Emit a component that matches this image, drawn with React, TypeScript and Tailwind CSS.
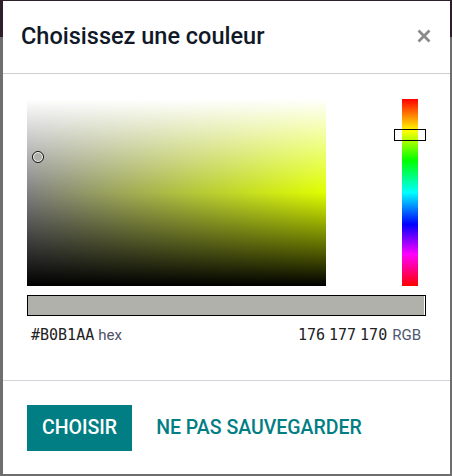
import React from 'react';

const sans = "font-['Roboto','Liberation_Sans',sans-serif]";
const mono = "font-['DejaVu_Sans_Mono','Liberation_Mono',monospace]";

export default function App() {
  return (
    <div className="w-[452px] h-[476px] overflow-hidden bg-[linear-gradient(to_bottom,#2e1f2b_37px,#6e6e6e_37px)] pt-[1px] pl-[3px]">
      <div className={`w-[447px] h-[473px] bg-white flex flex-col ${sans}`}>
        {/* header */}
        <div className="h-[73px] shrink-0 border-b border-[#cfcfcf] flex items-center justify-between pl-[18px] pr-[19px]">
          <h1 className="text-[23.5px] font-medium text-[#111827] -mt-[1px]">Choisissez une couleur</h1>
          <button className="text-[#8a8a8a] -mt-[2px]">
            <svg width="14" height="14" viewBox="0 0 14 14">
              <path d="M1.5 1.5 L12.5 12.5 M12.5 1.5 L1.5 12.5" stroke="currentColor" strokeWidth="2.8" />
            </svg>
          </button>
        </div>

        {/* body */}
        <div className="flex-1 px-[24px] pt-[25px] flex flex-col">
          <div className="flex justify-between">
            <div className="relative w-[299px] h-[187px] bg-[linear-gradient(to_bottom,#fff,rgba(255,255,255,0)_50%,rgba(0,0,0,0)_50%,#000),linear-gradient(to_right,#808080,#dfff00)]">
              <div className="absolute left-[5px] top-[52px] w-[12px] h-[12px] rounded-full border border-[#111] bg-[#b0b1aa] shadow-[inset_0_0_0_1px_#fff]" />
            </div>
            <div className="relative w-[32px] flex justify-center">
              <div className="w-[16px] h-[187px] bg-[linear-gradient(to_bottom,#f00,#ff0_17%,#0f0_33%,#0ff_50%,#00f_67%,#f0f_83%,#f00)]" />
              <div className="absolute left-0 top-[30px] w-[32px] h-[12px] border border-black" />
            </div>
          </div>

          <div className="mt-[9px] h-[21px] border border-black bg-[#b0b1aa] shadow-[inset_-1px_0_0_#fff]" />

          <div className="mt-[8px] flex justify-between items-baseline pl-[4px] pr-[5px] text-[15px]">
            <div className="flex items-baseline gap-[4px]">
              <span className={`${mono} text-[#222]`}>#B0B1AA</span>
              <span className="text-[#4f4f66]">hex</span>
            </div>
            <div className="flex items-baseline gap-[4px]">
              <span className={`${mono} text-[#222]`}>176</span>
              <span className={`${mono} text-[#222]`}>177</span>
              <span className={`${mono} text-[#222]`}>170</span>
              <span className="text-[#4f5670] ml-[1px]">RGB</span>
            </div>
          </div>
        </div>

        {/* footer */}
        <div className="h-[94px] shrink-0 border-t border-[#d3d5db] px-[24px] pt-[24px] flex items-start">
          <button className="h-[46px] px-[15px] bg-[#017e84] text-white text-[19.5px] font-medium uppercase">Choisir</button>
          <button className="h-[46px] pl-[24px] text-[#017e84] text-[19.5px] font-medium uppercase">Ne pas sauvegarder</button>
        </div>
      </div>
    </div>
  );
}
